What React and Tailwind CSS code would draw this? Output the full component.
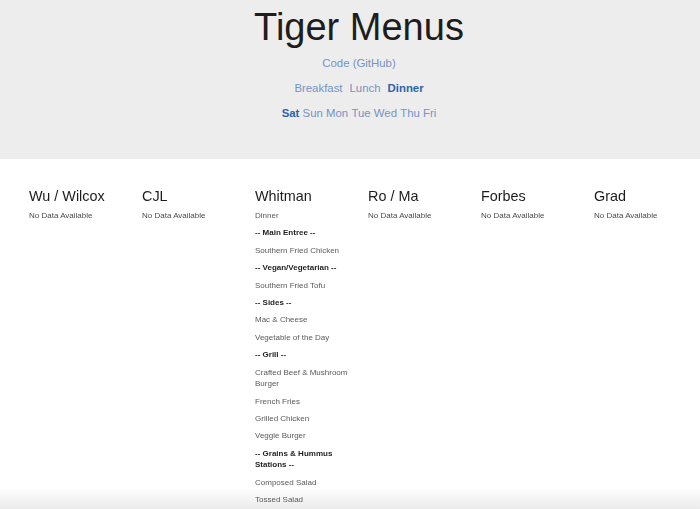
const halls = [
  { name: "Wu / Wilcox", items: null },
  { name: "CJL", items: null },
  {
    name: "Whitman",
    items: [
      { text: "Dinner" },
      { text: "-- Main Entree --", bold: true },
      { text: "Southern Fried Chicken" },
      { text: "-- Vegan/Vegetarian --", bold: true },
      { text: "Southern Fried Tofu" },
      { text: "-- Sides --", bold: true },
      { text: "Mac & Cheese" },
      { text: "Vegetable of the Day" },
      { text: "-- Grill --", bold: true },
      { text: "Crafted Beef & Mushroom Burger" },
      { text: "French Fries" },
      { text: "Grilled Chicken" },
      { text: "Veggie Burger" },
      { text: "-- Grains & Hummus Stations --", bold: true },
      { text: "Composed Salad" },
      { text: "Tossed Salad" },
    ],
  },
  { name: "Ro / Ma", items: null },
  { name: "Forbes", items: null },
  { name: "Grad", items: null },
];

const meals = ["Breakfast", "Lunch", "Dinner"];
const days = ["Sat", "Sun", "Mon", "Tue", "Wed", "Thu", "Fri"];

const HallColumn = ({ hall }) => (
  <div className="pr-[13px]">
    <h3 className="text-[14.4px] leading-[17px] text-[#1c1c1c] mb-[5px]">{hall.name}</h3>
    {hall.items ? (
      hall.items.map((item, i) => (
        <p
          key={i}
          className={
            item.bold
              ? "text-[8px] leading-[11.7px] mb-[5.7px] font-bold text-[#1f1f1f]"
              : "text-[8px] leading-[11.7px] mb-[5.7px] text-[#5a5a5a]"
          }
        >
          {item.text}
        </p>
      ))
    ) : (
      <p className="text-[8px] leading-[11.7px] text-[#4a4a4a]">No Data Available</p>
    )}
  </div>
);

export default function App() {
  return (
    <div className="min-h-[509px] bg-white font-['Liberation_Sans',Arial,sans-serif]">
      {/* Header */}
      <div className="h-[159px] bg-[#ededed] pl-[18px] flex flex-col items-center">
        <h1 className="mt-[7px] text-[38px] leading-[40px] text-[#1d1d1d]">Tiger Menus</h1>
        <a className="mt-[9px] text-[11.4px] leading-[14px] text-[#7493c6]">Code (GitHub)</a>
        <div className="mt-[11px] flex gap-[7px] text-[11.4px] leading-[14px] text-[#7493c6]">
          {meals.map((m) => (
            <a key={m} className={m === "Dinner" ? "font-bold text-[#2c63ab]" : ""}>
              {m}
            </a>
          ))}
        </div>
        <div className="mt-[11px] flex gap-[3.2px] text-[11.4px] leading-[14px] text-[#7493c6]">
          {days.map((d) => (
            <a key={d} className={d === "Sat" ? "font-bold text-[#2c63ab]" : ""}>
              {d}
            </a>
          ))}
        </div>
      </div>

      {/* scroll shade, sits behind the menus */}
      <div className="pointer-events-none fixed left-0 right-0 bottom-0 h-[22px] z-0 bg-gradient-to-b from-white/0 to-[#ebebeb]" />

      {/* Menus */}
      <div className="relative z-10 pt-[29px] pl-[29px] grid grid-cols-[repeat(6,113px)] items-start">
        {halls.map((hall) => (
          <HallColumn key={hall.name} hall={hall} />
        ))}
      </div>
    </div>
  );
}
